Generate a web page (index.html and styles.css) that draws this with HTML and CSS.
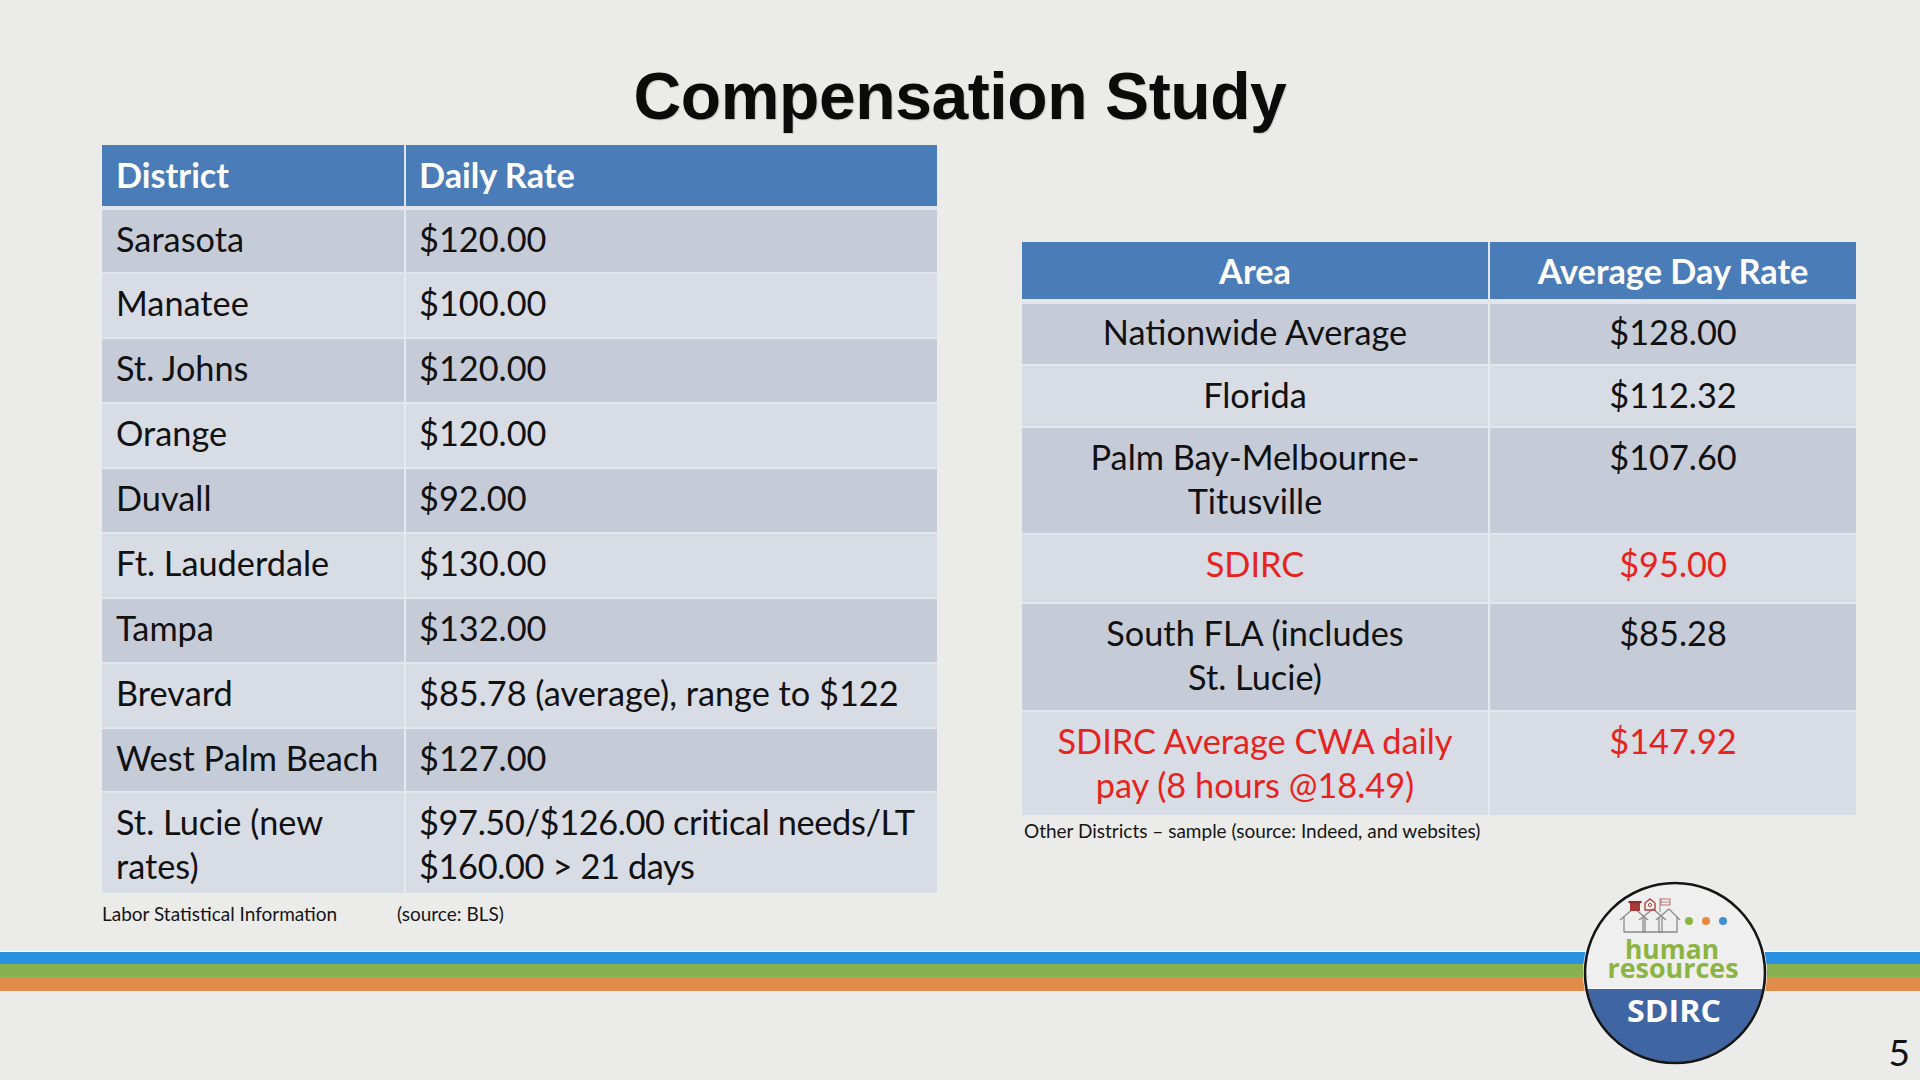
FILE: index.html
```html
<!DOCTYPE html>
<html lang="en">
<head>
<meta charset="utf-8">
<title>Compensation Study</title>
<link rel="stylesheet" href="styles.css">
</head>
<body>
<div class="slide">
  <h1 class="title">Compensation Study</h1>
  <div class="tables">
    <div class="col col-left">
      <div class="tbl tbl-left">
        <div class="row head"><div class="cell">District</div><div class="cell">Daily Rate</div></div>
        <div class="row dark first"><div class="cell">Sarasota</div><div class="cell">$120.00</div></div>
        <div class="row light"><div class="cell">Manatee</div><div class="cell">$100.00</div></div>
        <div class="row dark"><div class="cell">St. Johns</div><div class="cell">$120.00</div></div>
        <div class="row light"><div class="cell">Orange</div><div class="cell">$120.00</div></div>
        <div class="row dark"><div class="cell">Duvall</div><div class="cell">$92.00</div></div>
        <div class="row light"><div class="cell">Ft. Lauderdale</div><div class="cell">$130.00</div></div>
        <div class="row dark"><div class="cell">Tampa</div><div class="cell">$132.00</div></div>
        <div class="row light"><div class="cell">Brevard</div><div class="cell">$85.78 (average), range to $122</div></div>
        <div class="row dark"><div class="cell">West Palm Beach</div><div class="cell">$127.00</div></div>
        <div class="row light last"><div class="cell">St. Lucie (new<br>rates)</div><div class="cell tight">$97.50/$126.00 critical needs/LT<br>$160.00 &gt; 21 days</div></div>
      </div>
      <div class="note note-left"><span class="note-a">Labor Statistical Information</span><span>(source: BLS)</span></div>
    </div>
    <div class="col col-right">
      <div class="tbl tbl-right">
        <div class="row head"><div class="cell">Area</div><div class="cell">Average Day Rate</div></div>
        <div class="row dark first r1"><div class="cell">Nationwide Average</div><div class="cell">$128.00</div></div>
        <div class="row light r2"><div class="cell">Florida</div><div class="cell">$112.32</div></div>
        <div class="row dark r3"><div class="cell">Palm Bay-Melbourne-<br>Titusville</div><div class="cell">$107.60</div></div>
        <div class="row light r4 red"><div class="cell">SDIRC</div><div class="cell">$95.00</div></div>
        <div class="row dark r5"><div class="cell">South FLA (includes<br>St. Lucie)</div><div class="cell">$85.28</div></div>
        <div class="row light r6 red"><div class="cell">SDIRC Average CWA daily<br>pay (8 hours @18.49)</div><div class="cell">$147.92</div></div>
      </div>
      <div class="note note-right">Other Districts – sample (source: Indeed, and websites)</div>
    </div>
  </div>
  <div class="stripes">
    <div class="s-blue"></div>
    <div class="s-green"></div>
    <div class="s-orange"></div>
  </div>
  <svg class="logo" width="196" height="196" viewBox="0 0 196 196" xmlns="http://www.w3.org/2000/svg">
    <defs>
      <clipPath id="circ"><circle cx="98" cy="98" r="89"/></clipPath>
    </defs>
    <circle cx="98" cy="98" r="92" fill="#f4f4f4"/>
    <g clip-path="url(#circ)">
      <rect x="0" y="0" width="196" height="196" fill="#efefef"/>
      <rect x="0" y="114" width="196" height="90" fill="#3f66a2"/>
      <line x1="0" y1="113.3" x2="196" y2="113.3" stroke="#f7f7f7" stroke-width="1.5"/>
    </g>
    <circle cx="98" cy="98" r="90" fill="none" stroke="#151515" stroke-width="2.6"/>
    <g fill="none" stroke="#8a8a8a" stroke-width="1.3" stroke-linejoin="round">
      <path d="M47 42 L47 57 L68 57 L68 42"/>
      <path d="M43 45 L57 33 L71 45"/>
      <path d="M66 42 L66 57 L85 57 L85 42"/>
      <path d="M62 45 L76 34 L89 45"/>
      <path d="M82 42 L82 57 L100 57 L100 42"/>
      <path d="M79 45 L92 34 L103 45"/>
    </g>
    <g>
      <rect x="53" y="28" width="10" height="8" fill="#a93a3a"/>
      <rect x="51.5" y="26" width="13" height="2.2" fill="#8c2c2c"/>
      <path d="M68 35 L68 28 L73 24 L78 28 L78 35 Z" fill="none" stroke="#b24444" stroke-width="1.4"/>
      <circle cx="73" cy="30" r="1.6" fill="none" stroke="#b24444" stroke-width="1"/>
      <line x1="83" y1="37" x2="83" y2="23" stroke="#888" stroke-width="1"/>
      <rect x="84" y="24" width="9" height="6" fill="#f1f1f1" stroke="#c46060" stroke-width="0.9"/>
      <line x1="84" y1="27" x2="93" y2="27" stroke="#c46060" stroke-width="0.8"/>
    </g>
    <circle cx="112" cy="46" r="4" fill="#8bb443"/>
    <circle cx="129" cy="46" r="4" fill="#e8893d"/>
    <circle cx="146" cy="46" r="4" fill="#3f8fd5"/>
    <text class="logo-human" x="95" y="84" text-anchor="middle" textLength="94" lengthAdjust="spacingAndGlyphs">human</text>
    <text class="logo-human" x="96" y="102.5" text-anchor="middle" textLength="131" lengthAdjust="spacingAndGlyphs">resources</text>
    <text class="logo-sdirc" x="97" y="147" text-anchor="middle" textLength="94" lengthAdjust="spacingAndGlyphs">SDIRC</text>
  </svg>
  <div class="page-num">5</div>
</div>
</body>
</html>
```

FILE: styles.css
```css
html, body {
  margin: 0;
  padding: 0;
  background: #ebebea;
}

.slide {
  position: relative;
  width: 1920px;
  height: 1080px;
  overflow: hidden;
  background: #ebebea;
  font-family: Lato, "Liberation Sans", sans-serif;
  color: #111111;
}

.title {
  margin: 0;
  padding-top: 57px;
  height: 78px;
  line-height: 78px;
  font-family: "Liberation Sans", Arial, sans-serif;
  font-weight: bold;
  font-size: 66px;
  letter-spacing: -0.4px;
  text-align: center;
  color: #0b0b0b;
  text-shadow: 1px 1px 1px rgba(0, 0, 0, 0.15);
}

.tables {
  display: flex;
  align-items: flex-start;
  gap: 85px;
  box-sizing: border-box;
  height: 816px;
  padding-left: 102px;
  padding-top: 9.5px;
}

.col-left {
  width: 835px;
}

.col-right {
  width: 834px;
  margin-top: 97.5px;
}

.tbl {
  display: flex;
  flex-direction: column;
}

.row {
  display: grid;
  box-sizing: border-box;
  border-top: 2px solid #e3e7ed;
  font-size: 34.3px;
  line-height: 44px;
}

.tbl-left .row {
  grid-template-columns: 302px 533px;
  height: 64.9px;
}

.tbl-right .row {
  grid-template-columns: 466px 368px;
}

.cell {
  box-sizing: border-box;
  padding-top: 7px;
}

.cell.tight {
  letter-spacing: -0.35px;
}

.row .cell + .cell {
  border-left: 2px solid #e6e9ee;
}

.tbl-left .cell {
  padding-left: 14px;
}

.tbl-left .cell + .cell {
  padding-left: 13px;
}

.tbl-right .cell {
  text-align: center;
}

.dark {
  background: #c5ccd8;
}

.light {
  background: #d8dce5;
}

.head {
  border-top: none;
  background: #4a7cb8;
  color: #ffffff;
  font-weight: bold;
}

.head .cell {
  display: flex;
  align-items: center;
  padding-top: 0;
}

.head .cell + .cell {
  border-left: 2px solid #dfe5ee;
}

.tbl-right .head .cell {
  justify-content: center;
}

.tbl-left .head {
  height: 61.2px;
}

.tbl-left .first {
  height: 66.6px;
  border-top-width: 4px;
}

.tbl-left .last {
  height: 101.7px;
}

.tbl-right .head {
  height: 57px;
}

.tbl-right .r1 {
  height: 64.7px;
  border-top-width: 5px;
}

.tbl-right .r1 .cell {
  padding-top: 5.5px;
}

.tbl-right .r2 {
  height: 62.4px;
}

.tbl-right .r3 {
  height: 106.6px;
}

.tbl-right .r4 {
  height: 69.8px;
}

.tbl-right .r5 {
  height: 107.7px;
}

.tbl-right .r6 {
  height: 105.3px;
}

.red {
  color: #e6241d;
}

.note {
  font-size: 19px;
  line-height: 24px;
  color: #151515;
}

.note-left {
  display: flex;
  margin-top: 9px;
}

.note-a {
  width: 295px;
}

.note-right {
  margin-top: 4px;
  padding-left: 2px;
}

.stripes {
  border-top: 1px solid #f6f8fa;
}

.s-blue {
  height: 12px;
  background: #2892e0;
}

.s-green {
  height: 13px;
  background: #88b04f;
}

.s-orange {
  height: 14px;
  background: #e08d4c;
}

.logo {
  position: absolute;
  left: 1577px;
  top: 875px;
}

.logo-human {
  font-family: "Open Sans", sans-serif;
  font-weight: bold;
  font-size: 27px;
  fill: #8bb443;
}

.logo-sdirc {
  font-family: "Open Sans", sans-serif;
  font-weight: bold;
  font-size: 31px;
  fill: #ffffff;
}

.page-num {
  position: absolute;
  right: 10px;
  top: 1030px;
  font-size: 37px;
  line-height: 44px;
  color: #111111;
}
```
